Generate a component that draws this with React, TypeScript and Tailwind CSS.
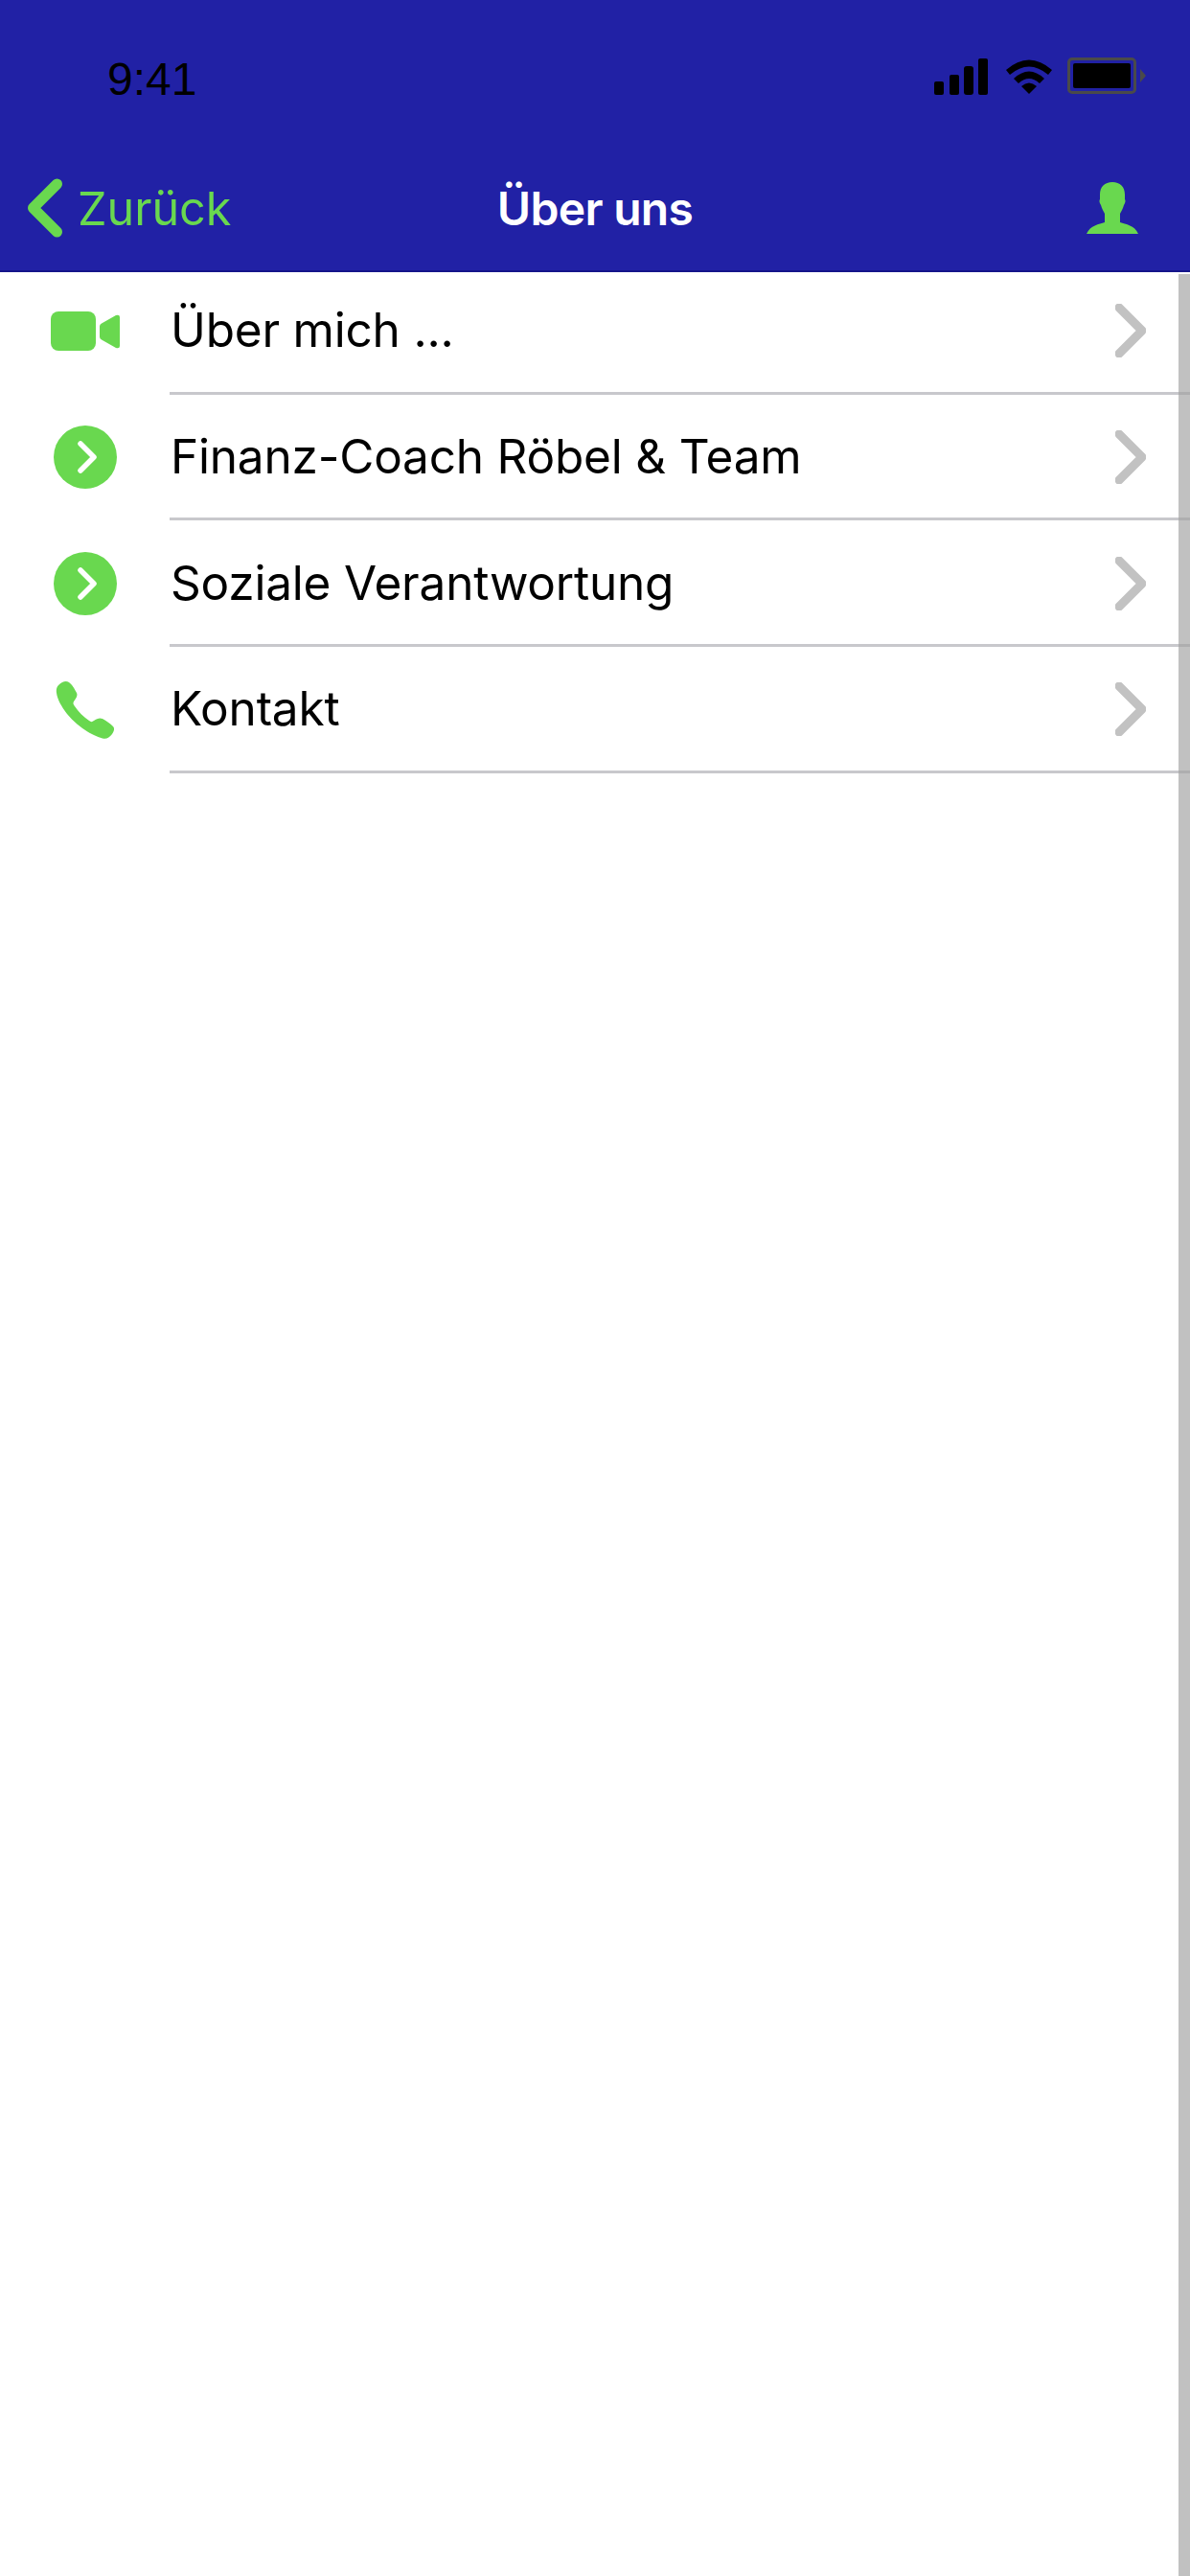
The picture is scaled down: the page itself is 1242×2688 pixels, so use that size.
import React from "react";

const green = "#69d84f";

const Chevron = () => (
  <svg width="32" height="56" viewBox="0 0 32 56" fill="none" className="shrink-0 mt-[2px]">
    <path d="M4 4 L28 28 L4 52" stroke="#c2c2c2" strokeWidth="9" strokeLinecap="round" strokeLinejoin="round" />
  </svg>
);

const VideoIcon = () => (
  <svg width="72" height="42" viewBox="0 0 72 42">
    <rect x="0" y="0" width="47" height="41" rx="8" fill={green} />
    <path d="M51 15.5 Q51 13.5 53 12.4 L68 4 Q72 3 72 6 L72 36 Q72 39 68 38 L53 29.6 Q51 28.5 51 26.5 Z" fill={green} />
  </svg>
);

const CircleIcon = () => (
  <svg width="66" height="66" viewBox="0 0 66 66">
    <circle cx="33" cy="33" r="33" fill={green} />
    <path d="M28 19 L42 33 L28 47" fill="none" stroke="#fff" strokeWidth="5.5" strokeLinecap="round" strokeLinejoin="round" />
  </svg>
);

const PhoneIcon = () => (
  <svg width="62" height="62" viewBox="0 0 62 62">
    <path
      d="M3 5 C7 1 11 0 14 2 C17 4 20 9 22 13 C23.500 16 21 19 19 22 C18 24 18.500 25 20 27 C24 33 29 38 35 42 C37 43.500 38 43.500 40 42 C43 40 46 38.500 49 40 C53 42 57 45 60 48 C62 50 61 53 59 56 C56 60 53 61.500 49 60.500 C36 57 22 47 12 35 C6 27 2 20 1 13 C0.500 10 1 7 3 5 Z"
      fill={green}
    />
  </svg>
);

const rows = [
  { label: "Über mich ...", icon: <VideoIcon /> },
  { label: "Finanz-Coach Röbel & Team", icon: <CircleIcon /> },
  { label: "Soziale Verantwortung", icon: <CircleIcon /> },
  { label: "Kontakt", icon: <PhoneIcon /> },
];

export default function App() {
  return (
    <div className="relative w-[1242px] h-[2688px] bg-white overflow-hidden font-['Inter',sans-serif]">
      <header className="relative z-10 h-[284px] bg-[#2121a5] border-b-2 border-[#15158a]">
        {/* status bar */}
        <div className="h-[158px] flex items-start">
          <span className="ml-[112px] mt-[56px] text-[48px] leading-[54px] text-black font-['Liberation_Sans',sans-serif]">9:41</span>
          <div className="ml-auto mt-[60px] mr-[46px] flex items-start">
            <svg width="56" height="38" viewBox="0 0 56 38" className="mt-[1px]">
              <rect x="0" y="24" width="10" height="14" rx="2" fill="#000" />
              <rect x="16" y="17" width="10" height="21" rx="2" fill="#000" />
              <rect x="31" y="8" width="10" height="30" rx="3" fill="#000" />
              <rect x="46" y="0" width="10" height="38" rx="2" fill="#000" />
            </svg>
            <svg width="50" height="38" viewBox="0 0 50 38" className="ml-[18px]">
              <path d="M1 13 Q25 -8 49 13 L45 18 Q25 1 5 18 Z" fill="#000" />
              <path d="M9 22 Q25 7 41 22 L36 27 Q25 17 14 27 Z" fill="#000" />
              <path d="M17 30 Q25 23 33 30 L25 38 Z" fill="#000" />
            </svg>
            <div className="ml-[15px] w-[72px] h-[38px] border-[3px] border-[#4a4a4a] rounded-[5px] p-[3px]">
              <div className="w-full h-full bg-black rounded-[2px]"></div>
            </div>
            <svg width="6" height="14" viewBox="0 0 6 14" className="ml-[4px] mt-[12px]">
              <path d="M0 0 L6 7 L0 14 Z" fill="#4a4a4a" />
            </svg>
          </div>
        </div>

        {/* nav bar */}
        <div className="relative h-[124px] flex items-center justify-between">
          <div className="flex items-center ml-[29px] mt-[-6px]">
            <svg width="36" height="62" viewBox="0 0 36 62" fill="none">
              <path d="M30.500 6 L5.500 31 L30.500 56" stroke={green} strokeWidth="11" strokeLinecap="round" strokeLinejoin="round" />
            </svg>
            <span className="ml-[16px] mt-[2px] text-[48.500px] leading-[56px] text-[#69d84f]">Zurück</span>
          </div>
          <span className="absolute left-0 right-0 text-center text-[48px] leading-[56px] text-white font-semibold tracking-[-0.7px] mt-[-4px]">Über uns</span>
          <svg width="54" height="54" viewBox="0 0 54 54" className="mr-[54px] mt-[-6px]">
            <path
              d="M27 0 C35 0 40 5 40 13 L40 18 C41 19 40.500 22 39 24 C38 28 36 31 35 33 L35 42 C41 44 50 45 54 54 L0 54 C4 45 13 44 19 42 L19 33 C18 31 16 28 15 24 C13.500 22 13 19 14 18 L14 13 C14 5 19 0 27 0 Z"
              fill={green}
            />
          </svg>
        </div>
      </header>

      {/* menu */}
      <ul className="-mt-[4px]">
        {rows.map((row) => (
          <li key={row.label} className="flex h-[131.670px]">
            <div className="w-[177px] shrink-0 flex items-center justify-center pl-[1px]">{row.icon}</div>
            <div className="flex-1 flex items-center border-b-[3px] border-[#c8c8cc] pl-[1px] pr-[46px]">
              <span className="flex-1 text-[49.500px] tracking-[-0.2px] text-black">{row.label}</span>
              <Chevron />
            </div>
          </li>
        ))}
      </ul>

      {/* scrollbar */}
      <div className="absolute right-0 top-[286px] bottom-0 w-[12px] bg-[#a0a0a0]/65"></div>
    </div>
  );
}
